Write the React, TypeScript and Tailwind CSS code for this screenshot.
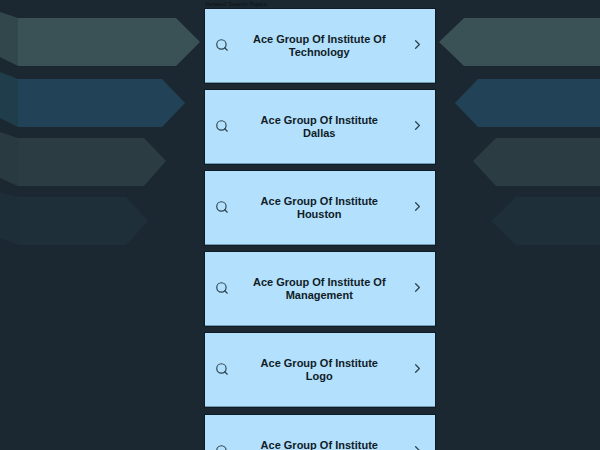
import { ChevronRight, Search } from "lucide-react";

const titles = [
  ["Ace Group Of Institute Of", "Technology"],
  ["Ace Group Of Institute", "Dallas"],
  ["Ace Group Of Institute", "Houston"],
  ["Ace Group Of Institute Of", "Management"],
  ["Ace Group Of Institute", "Logo"],
  ["Ace Group Of Institute", "Fort Worth"],
];

function Arrows() {
  return (
    <svg className="absolute inset-0 w-full h-full" viewBox="0 0 600 450">
      <polygon points="0,12 18,18 18,66 0,57" fill="#32474b" />
      <polygon points="18,18 176,18 200,42 176,66 18,66" fill="#3a5255" />
      <polygon points="0,72 18,79 18,127 0,118" fill="#203d4c" />
      <polygon points="18,79 162,79 185,103 162,127 18,127" fill="#224257" />
      <polygon points="0,132 18,138 18,186 0,178" fill="#293a40" />
      <polygon points="18,138 144,138 166,161 144,186 18,186" fill="#2b3d42" />
      <polygon points="0,192 18,197 18,245 0,238" fill="#1e2e38" />
      <polygon points="18,197 126,197 148,221 126,245 18,245" fill="#1f2f39" />
      <polygon points="600,18 464,18 439,42 464,66 600,66" fill="#3a5255" />
      <polygon points="600,79 478,79 455,103 478,127 600,127" fill="#224257" />
      <polygon points="600,138 496,138 473,161 496,186 600,186" fill="#2b3d42" />
      <polygon points="600,197 516,197 491,221 516,245 600,245" fill="#1f2f39" />
    </svg>
  );
}

export default function App() {
  return (
    <div className="relative w-[600px] h-[450px] overflow-hidden bg-[#1c2831] font-['Liberation_Sans',Arial,sans-serif]">
      <Arrows />
      <div className="relative ml-[205px] w-[229.5px]">
        <div className="h-[9px] text-[6.2px] leading-[7px] text-[#0b1216] whitespace-nowrap">Related Search Topics</div>
        <div className="flex flex-col gap-[7.1px]">
          {titles.map((t) => (
            <div
              key={t[1]}
              className="flex items-center h-[74px] shrink-0 pl-[10px] pr-[10px] last:mt-[1px] bg-[#b3e0fd] border-b border-[#6f9bb5] shadow-[0_0_0_1px_#101c23] text-[#101c26]"
            >
              <Search size={14} strokeWidth={2} className="shrink-0 -mt-[2px] text-[#2c4350]" />
              <div className="flex-1 pt-[1px] text-center text-[11px] leading-[13px] font-bold">
                {t[0]}
                <br />
                {t[1]}
              </div>
              <ChevronRight size={15} strokeWidth={2} className="shrink-0 -mt-[2px] text-[#2c4350]" />
            </div>
          ))}
        </div>
      </div>
    </div>
  );
}
